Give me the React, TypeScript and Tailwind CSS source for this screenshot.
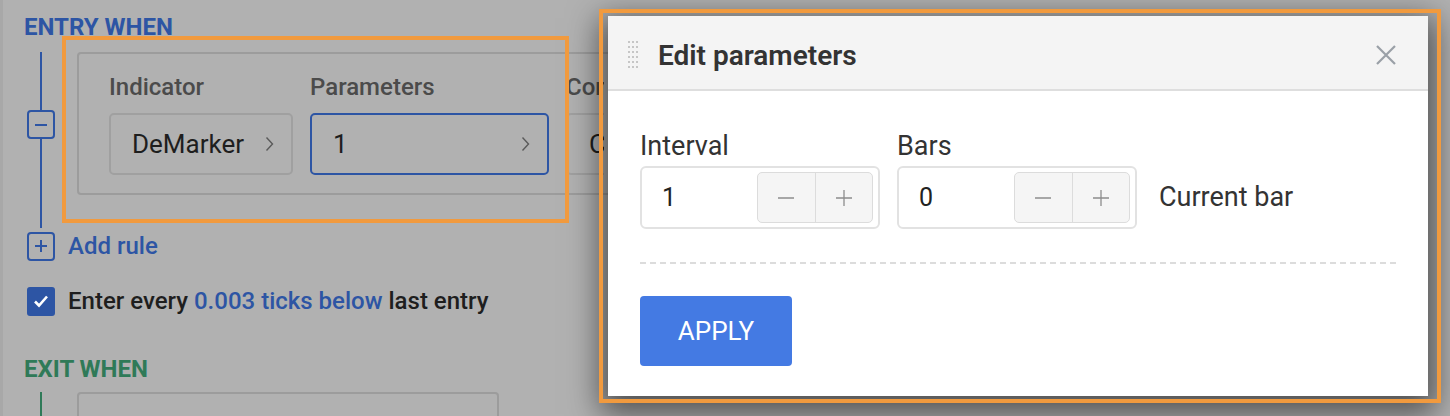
import React from "react";

const blue = "text-[#2d55a4]";

function Chevron() {
  return (
    <svg width="9" height="16" viewBox="0 0 9 16" fill="none" className="shrink-0">
      <path d="M1.5 1.5 L7.5 8 L1.5 14.5" stroke="#5a5a5a" strokeWidth="1.4" />
    </svg>
  );
}

function RailBox({ kind }: { kind: "minus" | "plus" }) {
  return (
    <div className="flex h-[29px] w-[28px] shrink-0 items-center justify-center rounded-[4px] border-2 border-[#2d55a4]">
      <svg width="14" height="14" viewBox="0 0 14 14">
        <path d="M1 7 H13" stroke="#2d55a4" strokeWidth="2" />
        {kind === "plus" && <path d="M7 1 V13" stroke="#2d55a4" strokeWidth="2" />}
      </svg>
    </div>
  );
}

function Field({ label, value, width, active }: { label: string; value: string; width: string; active?: boolean }) {
  return (
    <div className="flex shrink-0 flex-col gap-[12px]">
      <div className="whitespace-nowrap text-[24px] font-medium leading-[28px] text-[#4b4b4b]">{label}</div>
      <div
        className={`flex h-[62px] ${width} items-center justify-between rounded-[5px] border-2 pl-[21px] pr-[17px] text-[26px] text-[#1e1e1e] ${
          active ? "border-[#2d55a4]" : "border-[#a0a0a0]"
        }`}
      >
        <span className="whitespace-nowrap">{value}</span>
        <Chevron />
      </div>
    </div>
  );
}

function Stepper() {
  return (
    <div className="flex h-[51px] w-[116px] overflow-hidden rounded-[5px] border-[1.5px] border-[#dcdcdc] bg-[#f5f5f5]">
      <div className="flex flex-1 items-center justify-center border-r-[1.5px] border-[#dcdcdc]">
        <svg width="18" height="18" viewBox="0 0 18 18">
          <path d="M1 9 H17" stroke="#8c8c8c" strokeWidth="1.3" />
        </svg>
      </div>
      <div className="flex flex-1 items-center justify-center">
        <svg width="18" height="18" viewBox="0 0 18 18">
          <path d="M1 9 H17 M9 1 V17" stroke="#8c8c8c" strokeWidth="1.3" />
        </svg>
      </div>
    </div>
  );
}

function NumberInput({ label, value }: { label: string; value: string }) {
  return (
    <div className="flex flex-col gap-[5px]">
      <div className="text-[27px] leading-[30px] text-[#333]">{label}</div>
      <div className="flex h-[63px] w-[240px] items-center justify-between rounded-[6px] border-2 border-[#e2e2e2] pl-[20px] pr-[5px]">
        <span className="text-[25px] text-[#222]">{value}</span>
        <Stepper />
      </div>
    </div>
  );
}

function EditParamsModal() {
  return (
    <div className="absolute left-[608px] top-[16px] flex h-[380px] w-[820px] flex-col bg-white shadow-[0_10px_30px_8px_rgba(0,0,0,0.55)]">
      <div className="flex h-[75px] shrink-0 items-center border-b-2 border-[#dedede] bg-[#f4f4f4] pl-[20px] pr-[31px]">
        <svg width="10" height="28" viewBox="0 0 10 28" className="mr-[20px] mt-[4px]">
          {[0, 1, 2].map((c) =>
            [0, 1, 2, 3, 4, 5].map((r) => (
              <rect key={`${c}-${r}`} x={c * 4} y={r * 5} width="2" height="2" fill="#c6c6c6" />
            ))
          )}
        </svg>
        <div className="mt-[6px] text-[28px] font-semibold text-[#333]">Edit parameters</div>
        <svg width="22" height="22" viewBox="0 0 22 22" className="ml-auto mt-[4px]">
          <path d="M2 2 L20 20 M20 2 L2 20" stroke="#9aa0a7" strokeWidth="2.2" />
        </svg>
      </div>
      <div className="flex flex-col px-[32px] pt-[40px]">
        <div className="flex items-end gap-[17px]">
          <NumberInput label="Interval" value="1" />
          <NumberInput label="Bars" value="0" />
          <div className="flex h-[63px] items-center pl-[5px] text-[27px] text-[#333]">Current bar</div>
        </div>
        <div className="mt-[33px] border-t-2 border-dashed border-[#dcdcdc]" />
        <button className="mt-[32px] flex h-[70px] w-[152px] items-center justify-center rounded-[4px] bg-[#447ae3] text-[26px] text-white">
          APPLY
        </button>
      </div>
    </div>
  );
}

export default function App() {
  return (
    <div className="relative h-[416px] w-[1450px] overflow-hidden bg-[#b1b1b1] font-['Roboto',sans-serif] shadow-[inset_3px_0_0_#a8a8a8]">
      <div className="pl-[24px] pt-[14px]">
        <div className={`text-[24px] font-bold leading-[26px] ${blue}`}>ENTRY WHEN</div>

        <div className="mt-[12px] flex pl-[3px]">
          <div className="flex w-[28px] flex-col items-center">
            <div className="h-[58px] w-[2px] bg-[#2d55a4]" />
            <RailBox kind="minus" />
            <div className="w-[2px] flex-1 bg-[#2d55a4]" />
          </div>
          <div className="ml-[22px] pb-[33px]">
            <div className="flex h-[143px] w-[1000px] gap-[17px] rounded-[4px] border-2 border-[#9c9c9c] pl-[30px] pt-[19px]">
              <Field label="Indicator" value="DeMarker" width="w-[184px]" />
              <Field label="Parameters" value="1" width="w-[239px]" active />
              <div className="w-[38px] shrink-0 overflow-hidden">
                <Field label="Condition" value="Crosses" width="w-[200px]" />
              </div>
            </div>
          </div>
        </div>

        <div className="flex items-center gap-[13px] pl-[3px]">
          <RailBox kind="plus" />
          <div className={`text-[24px] font-medium ${blue}`}>Add rule</div>
        </div>

        <div className="mt-[19px] flex items-center gap-[13px] pl-[3px]">
          <div className="flex h-[29px] w-[28px] items-center justify-center rounded-[3px] bg-[#2d55a4]">
            <svg width="16" height="14" viewBox="0 0 16 14">
              <path d="M2 7.5 L6 11.5 L14 2.5" stroke="white" strokeWidth="2.6" fill="none" />
            </svg>
          </div>
          <div className="text-[24px] font-medium text-[#1e1e1e]">
            Enter every <span className={blue}>0.003 ticks below</span> last entry
          </div>
        </div>

        <div className="mt-[37px] text-[24px] font-bold leading-[26px] text-[#2f7a58]">EXIT WHEN</div>
        <div className="mt-[10px] flex pl-[3px]">
          <div className="flex w-[28px] justify-center">
            <div className="h-[40px] w-[2px] bg-[#2f7a58]" />
          </div>
          <div className="ml-[22px] h-[60px] w-[422px] rounded-[4px] border-2 border-[#9c9c9c]" />
        </div>
      </div>

      <EditParamsModal />

      <div className="pointer-events-none absolute left-[62px] top-[36px] h-[187px] w-[507px] border-4 border-[#f19a3e]" />
      <div className="pointer-events-none absolute left-[599px] top-[9px] h-[394px] w-[842px] border-4 border-[#f19a3e]" />
    </div>
  );
}
